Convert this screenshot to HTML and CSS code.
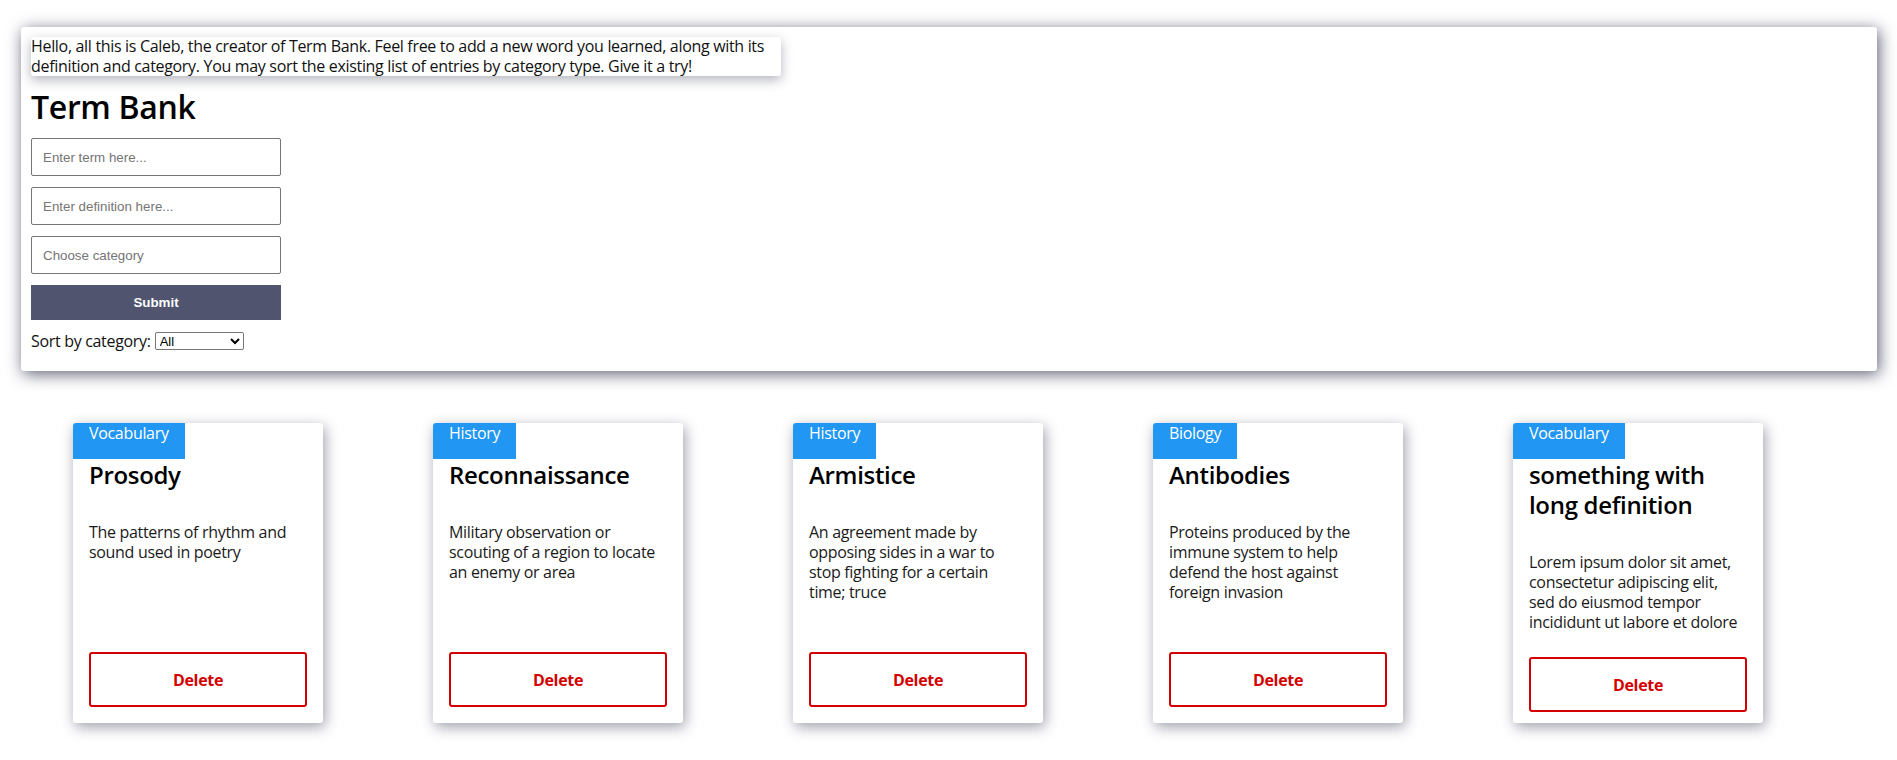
FILE: index.html
```html
<!DOCTYPE html>
<html lang="en">
<head>
<meta charset="utf-8">
<title>Term Bank</title>
<link rel="stylesheet" href="styles.css">
</head>
<body>
<div class="page">
  <section class="panel">
    <p class="intro">Hello, all this is Caleb, the creator of Term Bank. Feel free to add a new word you learned, along with its definition and category. You may sort the existing list of entries by category type. Give it a try!</p>
    <h1 class="title">Term Bank</h1>
    <form class="entry-form">
      <input class="field" type="text" placeholder="Enter term here...">
      <input class="field" type="text" placeholder="Enter definition here...">
      <input class="field" type="text" placeholder="Choose category">
      <button class="submit" type="button">Submit</button>
    </form>
    <div class="sort-row">
      <span>Sort by category:</span>
      <select class="sort-select">
        <option>All</option>
        <option>Vocabulary</option>
        <option>History</option>
        <option>Biology</option>
      </select>
    </div>
  </section>

  <section class="cards">
    <article class="card">
      <div class="tag">Vocabulary</div>
      <h2 class="term">Prosody</h2>
      <p class="def">The patterns of rhythm and sound used in poetry</p>
      <button class="delete" type="button">Delete</button>
    </article>
    <article class="card">
      <div class="tag">History</div>
      <h2 class="term">Reconnaissance</h2>
      <p class="def">Military observation or scouting of a region to locate an enemy or area</p>
      <button class="delete" type="button">Delete</button>
    </article>
    <article class="card">
      <div class="tag">History</div>
      <h2 class="term">Armistice</h2>
      <p class="def">An agreement made by opposing sides in a war to stop fighting for a certain time; truce</p>
      <button class="delete" type="button">Delete</button>
    </article>
    <article class="card">
      <div class="tag">Biology</div>
      <h2 class="term">Antibodies</h2>
      <p class="def">Proteins produced by the immune system to help defend the host against foreign invasion</p>
      <button class="delete" type="button">Delete</button>
    </article>
    <article class="card">
      <div class="tag">Vocabulary</div>
      <h2 class="term">something with long definition</h2>
      <p class="def">Lorem ipsum dolor sit amet, consectetur adipiscing elit, sed do eiusmod tempor incididunt ut labore et dolore</p>
      <button class="delete" type="button">Delete</button>
    </article>
  </section>
</div>
</body>
</html>
```

FILE: styles.css
```css
* { box-sizing: border-box; }

html, body {
  margin: 0;
  background: #ffffff;
}

body {
  font-family: "Open Sans", Lato, sans-serif;
  letter-spacing: -0.02em;
  color: #111;
}

.page {
  padding: 27px 20px 40px 21px;
}

.panel {
  background: #fff;
  border-radius: 3px;
  padding: 10px 10px 20px;
  box-shadow: 2px 3px 16px rgba(40, 42, 70, 0.75);
}

.intro {
  margin: 0;
  width: 750px;
  font-size: 16px;
  line-height: 19.5px;
  color: #111;
  border-radius: 3px;
  box-shadow: 0 4px 12px rgba(40, 42, 70, 0.35);
}

.title {
  margin: 11px 0 11px;
  font-size: 32px;
  line-height: 40px;
  font-weight: 600;
  color: #000;
}

.entry-form {
  display: flex;
  flex-direction: column;
  width: 250px;
  gap: 11px;
}

.field {
  height: 38px;
  margin: 0;
  padding: 0 11px;
  border: 1px solid #767676;
  border-radius: 2px;
  font-family: Arial, "Liberation Sans", sans-serif;
  font-size: 13.33px;
  letter-spacing: normal;
  color: #333;
  background: #fff;
}

.field::placeholder {
  color: #757575;
}

.submit {
  height: 35px;
  margin: 0;
  border: none;
  background: #50546e;
  color: #fff;
  font-family: Arial, "Liberation Sans", sans-serif;
  font-size: 13.33px;
  letter-spacing: normal;
  font-weight: 700;
}

.sort-row {
  margin-top: 11px;
  display: flex;
  align-items: center;
  gap: 4px;
  font-size: 16px;
  line-height: 20px;
}

.sort-select {
  width: 89px;
  height: 18px;
  font-family: Arial, "Liberation Sans", sans-serif;
  font-size: 13px;
  letter-spacing: normal;
  padding: 0;
  border: 1px solid #767676;
  border-radius: 2px;
  background: #fff;
  color: #000;
}

.cards {
  display: flex;
  gap: 110px;
  margin-top: 52px;
  padding-left: 52px;
}

.card {
  width: 250px;
  height: 300px;
  flex: none;
  display: flex;
  flex-direction: column;
  padding: 0 16px 16px;
  background: #fff;
  border-radius: 3px;
  box-shadow: 2px 4px 14px rgba(40, 42, 70, 0.45);
}

.tag {
  flex: none;
  align-self: flex-start;
  margin-left: -16px;
  height: 36px;
  padding: 0 16px;
  background: #2196f3;
  color: #fff;
  font-size: 16px;
  line-height: 20px;
  border-top-left-radius: 3px;
}

.term {
  flex: none;
  margin: 1px 0 0;
  font-size: 24px;
  line-height: 30px;
  font-weight: 600;
  color: #000;
}

.def {
  flex: none;
  margin: 32px 0 25px;
  font-size: 16px;
  line-height: 20px;
  color: #1a1a1a;
}

.delete {
  margin-top: auto;
  flex: none;
  height: 55px;
  border: 2px solid #d40000;
  border-radius: 3px;
  background: #fff;
  color: #d40000;
  font-family: "Open Sans", Lato, sans-serif;
  letter-spacing: -0.02em;
  font-size: 16px;
  font-weight: 700;
}
```
